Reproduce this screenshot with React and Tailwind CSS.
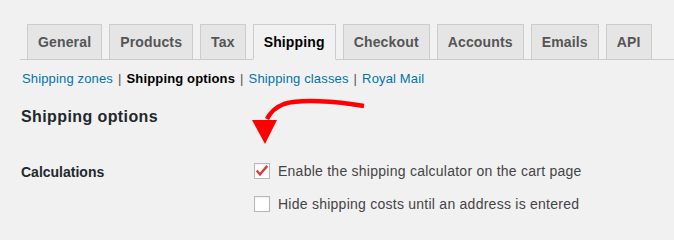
import React from "react";

const tabs = ["General", "Products", "Tax", "Shipping", "Checkout", "Accounts", "Emails", "API"];
const sections = ["Shipping zones", "Shipping options", "Shipping classes", "Royal Mail"];

const Checkbox = ({ checked }) => (
  <span className="w-4 h-4 shrink-0 bg-white border border-[#b4b9be] shadow-[inset_0_1px_2px_rgba(0,0,0,0.07)] flex items-center justify-center">
    {checked && (
      <svg className="w-[14px] h-[14px]" viewBox="0 0 14 14" fill="none">
        <path d="M2.5 7.5L5 10.5L11.5 2.8" stroke="#e2363c" strokeWidth={2.4} strokeLinecap="square" strokeLinejoin="miter" />
      </svg>
    )}
  </span>
);

const App = () => {
  return (
    <div className="relative w-[674px] h-[240px] bg-[#f1f1f1] overflow-hidden font-['Liberation_Sans',Arial,sans-serif] text-[#23282d]">
      <div className="pl-[20px] pt-[24px]">

        {/* Tabs */}
        <div className="flex border-b border-[#ccc] h-[36px]">
          {tabs.map((tab) => (
            <div
              key={tab}
              className={
                tab === "Shipping"
                  ? "ml-[7px] h-[36px] px-[10px] py-[5px] text-[14px] leading-[24px] tracking-[0.15px] font-bold border border-[#ccc] border-b-[#f1f1f1] bg-[#f1f1f1] text-black"
                  : "ml-[7px] h-[36px] px-[10px] py-[5px] text-[14px] leading-[24px] tracking-[0.15px] font-bold border border-[#ccc] bg-[#e5e5e5] text-[#555]"
              }
            >
              {tab}
            </div>
          ))}
        </div>

        {/* Section links */}
        <div className="mt-[8px] pl-[2px] flex text-[13px] leading-[22px] tracking-[0.15px] text-[#555]">
          {sections.map((s, i) => (
            <span key={s} className="flex">
              {i > 0 && <span className="px-[5px]">|</span>}
              {s === "Shipping options" ? (
                <span className="font-bold text-black">{s}</span>
              ) : (
                <span className="text-[#0073aa]">{s}</span>
              )}
            </span>
          ))}
        </div>

        {/* Heading */}
        <h2 className="mt-[17px] pl-[1px] text-[16px] leading-[20px] tracking-[0.4px] font-bold text-[#23282d]">Shipping options</h2>

        {/* Calculations */}
        <div className="mt-[35px] flex">
          <div className="w-[234px] pl-[1px] text-[14px] leading-[20px] font-bold">Calculations</div>
          <div className="mt-[1px] flex flex-col gap-[17px] text-[14px] leading-[16px] tracking-[0.25px] text-[#444]">
            <label className="flex items-center gap-[8px]">
              <Checkbox checked />
              <span>Enable the shipping calculator on the cart page</span>
            </label>
            <label className="flex items-center gap-[8px]">
              <Checkbox />
              <span>Hide shipping costs until an address is entered</span>
            </label>
          </div>
        </div>
      </div>

      {/* Red annotation arrow */}
      <svg className="absolute left-[240px] top-[95px]" width="140" height="55" viewBox="0 0 140 55" fill="none">
        <path d="M124 11 C95 6 60 4 44 9 C36 12 31 16 27 24" stroke="#ff0000" strokeWidth={4.5} />
        <path d="M12 25 L37 25 L25 49 Z" fill="#ff0000" />
      </svg>
    </div>
  );
};

export default App;
